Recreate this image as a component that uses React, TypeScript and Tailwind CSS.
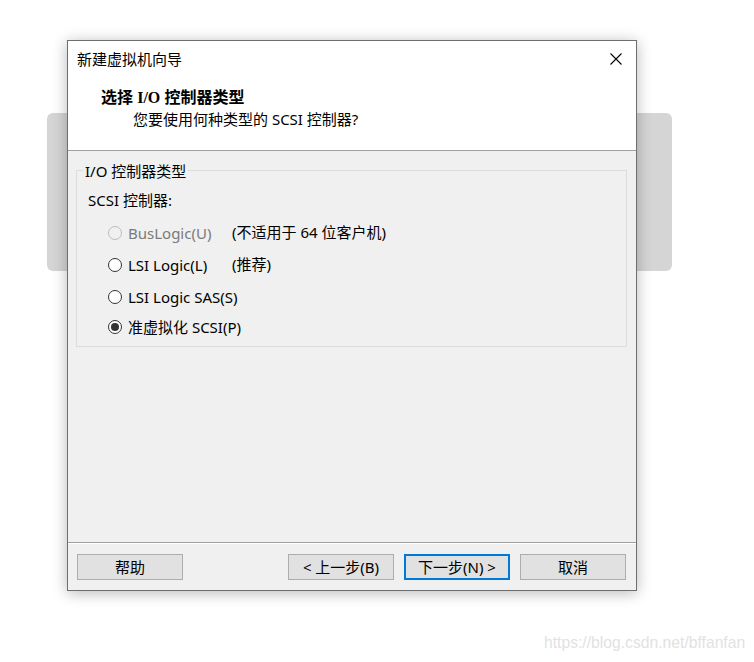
import React from "react";

const FONT = { fontFamily: '"Noto Sans", "Noto Sans CJK SC", sans-serif' };

function Radio({ checked, disabled }: { checked?: boolean; disabled?: boolean }) {
  return (
    <div
      className={`w-[14px] h-[14px] rounded-full border flex items-center justify-center ${
        disabled ? "border-[#bcbcbc] bg-[#f0f0f0]" : "border-[#333333] bg-white"
      }`}
    >
      {checked && <div className="w-[8px] h-[8px] rounded-full bg-[#333333]" />}
    </div>
  );
}

function Btn({ children, primary }: { children: React.ReactNode; primary?: boolean }) {
  return (
    <div
      className={`w-[106px] h-[26px] flex items-center justify-center bg-[#e1e1e1] text-[15px] text-black ${
        primary ? "border-2 border-[#0078d7]" : "border border-[#adadad]"
      }`}
    >
      {children}
    </div>
  );
}

export default function App() {
  const rows = [
    { label: "BusLogic(U)", note: "(不适用于 64 位客户机)", disabled: true, h: "h-[32px]" },
    { label: "LSI Logic(L)", note: "(推荐)", h: "h-[32px]" },
    { label: "LSI Logic SAS(S)", h: "h-[32px]" },
    { label: "准虚拟化 SCSI(P)", checked: true, h: "h-[28px]" },
  ];
  return (
    <div className="relative w-[754px] h-[662px] bg-white overflow-hidden" style={FONT}>
      {/* window behind */}
      <div className="absolute left-[47px] top-[113px] w-[625px] h-[158px] rounded-[6px] bg-[#d5d5d5]" />

      {/* dialog */}
      <div className="absolute left-[67px] top-[40px] w-[570px] h-[551px] border border-[#6e6e6e] bg-[#f0f0f0] flex flex-col shadow-[0_2px_14px_rgba(0,0,0,0.28)]">
        {/* header */}
        <div className="h-[110px] bg-white border-b border-[#a0a0a0] pt-[9px] pl-[9px] pr-[14px] shrink-0">
          <div className="flex items-center justify-between h-[20px]">
            <span className="text-[15px] leading-[20px] text-black mt-[-2px]">新建虚拟机向导</span>
            <svg width="12" height="12" viewBox="0 0 12 12" className="mt-[-2px]">
              <path d="M0.5 0.5 L11.5 11.5 M11.5 0.5 L0.5 11.5" stroke="#000" strokeWidth="1.1" fill="none" />
            </svg>
          </div>
          <div className="mt-[17px] ml-[24px] h-[20px] text-[16px] leading-[20px] font-bold text-black whitespace-nowrap">
            选择 <span style={{ fontFamily: '"Liberation Serif", serif' }}>I/O</span> 控制器类型
          </div>
          <div className="mt-[2px] ml-[56px] h-[20px] text-[15px] leading-[20px] text-black">
            您要使用何种类型的 SCSI 控制器?
          </div>
        </div>

        {/* body */}
        <div className="flex-1 pt-[19px] pl-[8px] pr-[9px]">
          <div className="relative border border-[#dcdcdc] pl-[11px] pt-[19px] pb-[5px]">
            <span className="absolute left-[6px] top-[-10px] px-[2px] bg-[#f0f0f0] text-[15px] leading-[20px] text-black">
              I/O 控制器类型
            </span>
            <div className="h-[20px] text-[15px] leading-[20px] text-black">SCSI 控制器:</div>
            <div className="mt-[7px] pl-[20px]">
              {rows.map((r) => (
                <div key={r.label} className={`${r.h} flex items-center`}>
                  <Radio checked={r.checked} disabled={r.disabled} />
                  <span
                    className={`ml-[6px] w-[104px] text-[15px] leading-[20px] whitespace-nowrap ${
                      r.disabled ? "text-[#7a7a7a]" : "text-black"
                    }`}
                  >
                    {r.label}
                  </span>
                  {r.note && (
                    <span className="text-[15px] leading-[20px] text-black whitespace-nowrap mt-[-3px]">{r.note}</span>
                  )}
                </div>
              ))}
            </div>
          </div>
        </div>

        {/* footer */}
        <div className="h-[48px] shrink-0 border-t border-[#a0a0a0] shadow-[inset_0_1px_0_#ffffff] pt-[11px] pl-[9px] pr-[10px] flex items-start">
          <Btn>帮助</Btn>
          <div className="flex-1" />
          <Btn>&lt; 上一步(B)</Btn>
          <div className="w-[10px]" />
          <Btn primary>下一步(N) &gt;</Btn>
          <div className="w-[10px]" />
          <Btn>取消</Btn>
        </div>
      </div>

      {/* watermark */}
      <div
        className="absolute left-[544px] top-[633px] text-[15.7px] leading-[20px] text-[#e2e2e2] whitespace-nowrap"
        style={{ fontFamily: '"Liberation Sans", Arial, sans-serif' }}
      >
        https://blog.csdn.net/bffanfan
      </div>
    </div>
  );
}
